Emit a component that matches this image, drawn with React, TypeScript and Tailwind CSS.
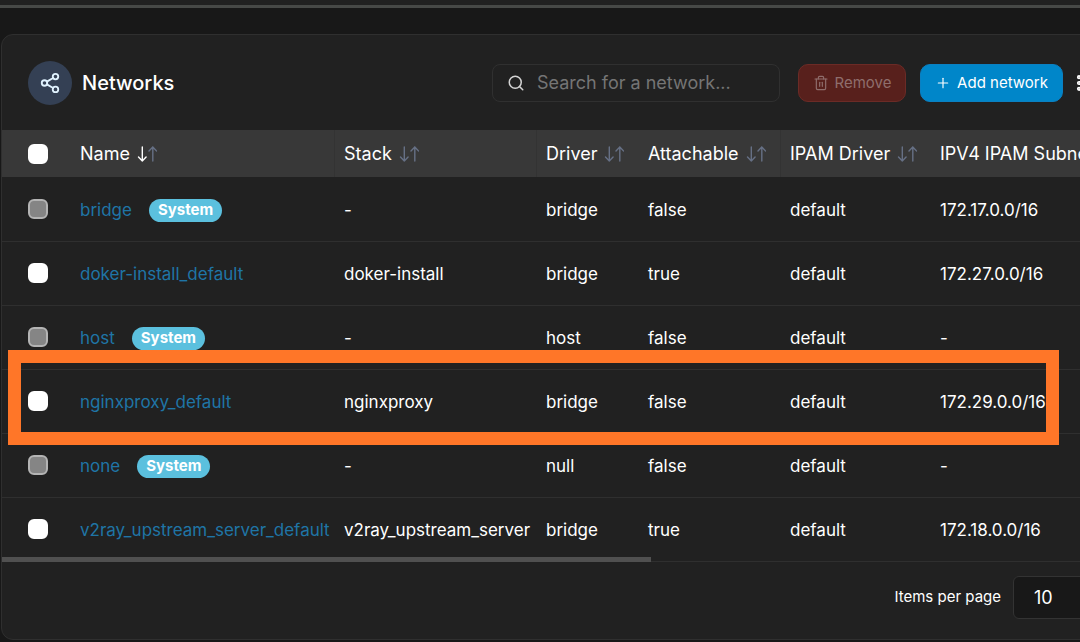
import React from "react";
import { MoreVertical, Plus, Search, Share2, Trash2 } from "lucide-react";

type Network = {
  name: string;
  system?: boolean;
  stack: string;
  driver: string;
  attachable: boolean;
  ipamDriver: string;
  subnet: string;
};

const networks: Network[] = [
  { name: "bridge", system: true, stack: "-", driver: "bridge", attachable: false, ipamDriver: "default", subnet: "172.17.0.0/16" },
  { name: "doker-install_default", stack: "doker-install", driver: "bridge", attachable: true, ipamDriver: "default", subnet: "172.27.0.0/16" },
  { name: "host", system: true, stack: "-", driver: "host", attachable: false, ipamDriver: "default", subnet: "-" },
  { name: "nginxproxy_default", stack: "nginxproxy", driver: "bridge", attachable: false, ipamDriver: "default", subnet: "172.29.0.0/16" },
  { name: "none", system: true, stack: "-", driver: "null", attachable: false, ipamDriver: "default", subnet: "-" },
  { name: "v2ray_upstream_server_default", stack: "v2ray_upstream_server", driver: "bridge", attachable: true, ipamDriver: "default", subnet: "172.18.0.0/16" },
];

const columns = [
  { label: "Name", width: "w-[264px]", divider: false },
  { label: "Stack", width: "w-[202px]", divider: true },
  { label: "Driver", width: "w-[102px]", divider: true },
  { label: "Attachable", width: "w-[142px]", divider: false },
  { label: "IPAM Driver", width: "w-[150px]", divider: true },
  { label: "IPV4 IPAM Subnet", width: "w-[220px]", divider: false },
];

const SortIcon = ({ active }: { active?: boolean }) => (
  <svg
    width="20"
    height="16"
    viewBox="0 0 20 16"
    fill="none"
    stroke="#667085"
    strokeWidth="1.4"
    strokeLinecap="round"
    strokeLinejoin="round"
    aria-hidden="true"
  >
    <path
      d="M5.3 1v14M1.5 11l3.8 4 3.8-4"
      stroke={active ? "#ffffff" : "#667085"}
    />
    <path d="M15.8 15V1M12 5l3.8-4 3.8 4" />
  </svg>
);

const Checkbox = ({ label, disabled }: { label: string; disabled?: boolean }) => (
  <input
    type="checkbox"
    aria-label={label}
    disabled={disabled}
    className="block size-5 appearance-none rounded-md border-2 border-white bg-white disabled:border-[#b4b4b4] disabled:bg-[#858585]"
  />
);

const Cell = ({ children }: { children: React.ReactNode }) => (
  <td className="pt-[3px] pl-2.5">{children}</td>
);

const App = () => {
  return (
    <div className="min-h-screen overflow-hidden bg-[#181818] font-['Inter',sans-serif] text-white">
      <header className="h-2 border-b-[3px] border-[#474947] bg-[#212121]" />

      <main className="-mr-8 mt-[26px] ml-px rounded-xl border border-[#2f2f2f] bg-[#212121]">
        <div className="flex h-[95px] items-center pr-[22px] pl-[26px]">
          <span className="flex size-11 items-center justify-center rounded-full bg-[#344054] text-[#e0f2fe]">
            <Share2 size={22} strokeWidth={2} />
          </span>
          <h1 className="ml-2.5 text-xl font-medium">Networks</h1>

          <label className="ml-auto flex h-[38px] w-72 items-center gap-3 rounded-lg border border-[#303030] px-3.5">
            <Search size={18} strokeWidth={2} className="shrink-0 text-[#d4d4d4]" />
            <input
              type="text"
              aria-label="Search networks"
              placeholder="Search for a network..."
              className="w-full min-w-0 bg-transparent text-lg outline-none placeholder:text-[#757575]"
            />
          </label>
          <button
            type="button"
            disabled
            className="ml-[18px] flex h-[38px] w-[108px] items-center justify-center gap-1.5 rounded-[10px] border border-[#6b2b26] bg-[#58201c] text-[15px]/6 text-[#8f6e6c]"
          >
            <Trash2 size={16} strokeWidth={1.75} />
            Remove
          </button>
          <button
            type="button"
            className="ml-3.5 flex h-[38px] w-[143px] items-center justify-center gap-1.5 rounded-[10px] border border-[#0b80c2] bg-[#0086c9] text-[15px]/6"
          >
            <Plus size={16} strokeWidth={1.75} />
            Add network
          </button>
          <button type="button" aria-label="Table settings" className="ml-1.5">
            <MoreVertical size={20} strokeWidth={3} />
          </button>
        </div>

        <section className="relative">
          <div className="overflow-hidden">
            <table className="w-full table-fixed border-collapse text-left whitespace-nowrap">
              <thead className="bg-[#383838] text-lg">
                <tr className="h-[47px]">
                  <th className="w-[68px] pl-[26px]">
                    <Checkbox label="Select all networks" />
                  </th>
                  {columns.map((col) => (
                    <th
                      key={col.label}
                      className={`${col.width} relative pl-2.5 font-normal`}
                    >
                      {col.divider && (
                        <span className="absolute inset-y-0 left-0 w-px bg-[#333333]" />
                      )}
                      <button type="button" className="flex items-center gap-[7px]">
                        {col.label}
                        <SortIcon active={col.label === "Name"} />
                      </button>
                    </th>
                  ))}
                </tr>
              </thead>
              <tbody className="text-[17px]">
                {networks.map((network) => (
                  <tr key={network.name} className="h-16 border-b border-[#2f2f2f]">
                    <td className="pl-[26px]">
                      <Checkbox
                        label={`Select ${network.name}`}
                        disabled={network.system}
                      />
                    </td>
                    <Cell>
                      <div className="flex items-center gap-[17px]">
                        <a href="#" className="text-[#1f75a6]">
                          {network.name}
                        </a>
                        {network.system && (
                          <span className="flex h-[23px] items-center rounded-full bg-[#5bc0de] px-[9px] text-[15px] font-bold">
                            System
                          </span>
                        )}
                      </div>
                    </Cell>
                    <Cell>{network.stack}</Cell>
                    <Cell>{network.driver}</Cell>
                    <Cell>{String(network.attachable)}</Cell>
                    <Cell>{network.ipamDriver}</Cell>
                    <Cell>{network.subnet}</Cell>
                  </tr>
                ))}
              </tbody>
            </table>
          </div>
          {/* scroll thumb */}
          <div className="absolute bottom-0 left-0 h-[5px] w-[649px] bg-[#505050]" />
          {/* highlighted row */}
          <div className="pointer-events-none absolute top-[220px] right-[52px] left-1.5 h-[95px] border-[13px] border-[#ff7628]" />
        </section>

        <footer className="flex h-[77px] items-center justify-end gap-3 pr-[18px] pb-[5px]">
          <label htmlFor="per-page" className="text-[15px]">
            Items per page
          </label>
          <select
            id="per-page"
            defaultValue="10"
            className="h-[43px] w-20 appearance-none rounded-md border border-[#333333] bg-[#181818] pl-5 text-lg"
          >
            <option>10</option>
            <option>25</option>
            <option>50</option>
          </select>
        </footer>
      </main>
    </div>
  );
};

export default App;
